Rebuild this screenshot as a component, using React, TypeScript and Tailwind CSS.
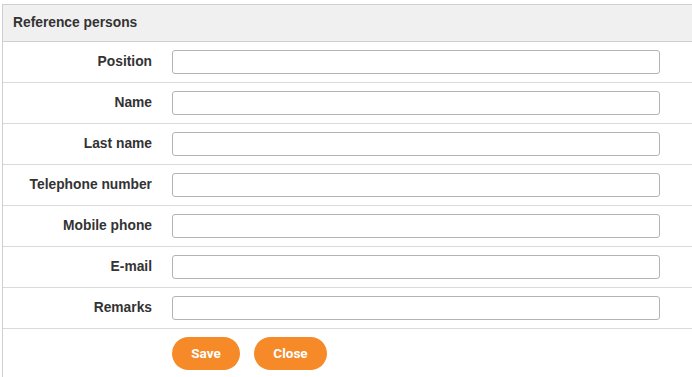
import React from "react";

const fields = [
  "Position",
  "Name",
  "Last name",
  "Telephone number",
  "Mobile phone",
  "E-mail",
  "Remarks",
];

const App = () => {
  return (
    <div className="min-h-screen bg-white pt-[4px] pl-[2px] font-['Liberation_Sans',Arial,sans-serif] text-[13.8px] text-[#333]">
      <div className="border-l border-t border-[#cfcfcf]">
        <div className="flex h-[37px] items-center border-b border-[#cfcfcf] bg-[#f0f0f0] pl-[10px] font-bold">
          Reference persons
        </div>
        {fields.map((label) => (
          <div
            key={label}
            className="flex h-[41px] items-center border-b border-[#dadada]"
          >
            <label className="w-[149px] text-right font-bold">{label}</label>
            <input
              type="text"
              className="ml-[20px] h-[24px] w-[488px] rounded-[3px] border border-[#b3b3b3] bg-white px-2 outline-none"
            />
          </div>
        ))}
        <div className="flex h-[48px] items-center gap-[14px] pl-[169px]">
          <button className="h-[33px] w-[68px] rounded-full bg-[#f68a28] font-['Roboto',sans-serif] text-[13.5px] font-bold text-white">
            Save
          </button>
          <button className="h-[33px] w-[73px] rounded-full bg-[#f68a28] font-['Roboto',sans-serif] text-[13.5px] font-bold text-white">
            Close
          </button>
        </div>
      </div>
    </div>
  );
};

export default App;
